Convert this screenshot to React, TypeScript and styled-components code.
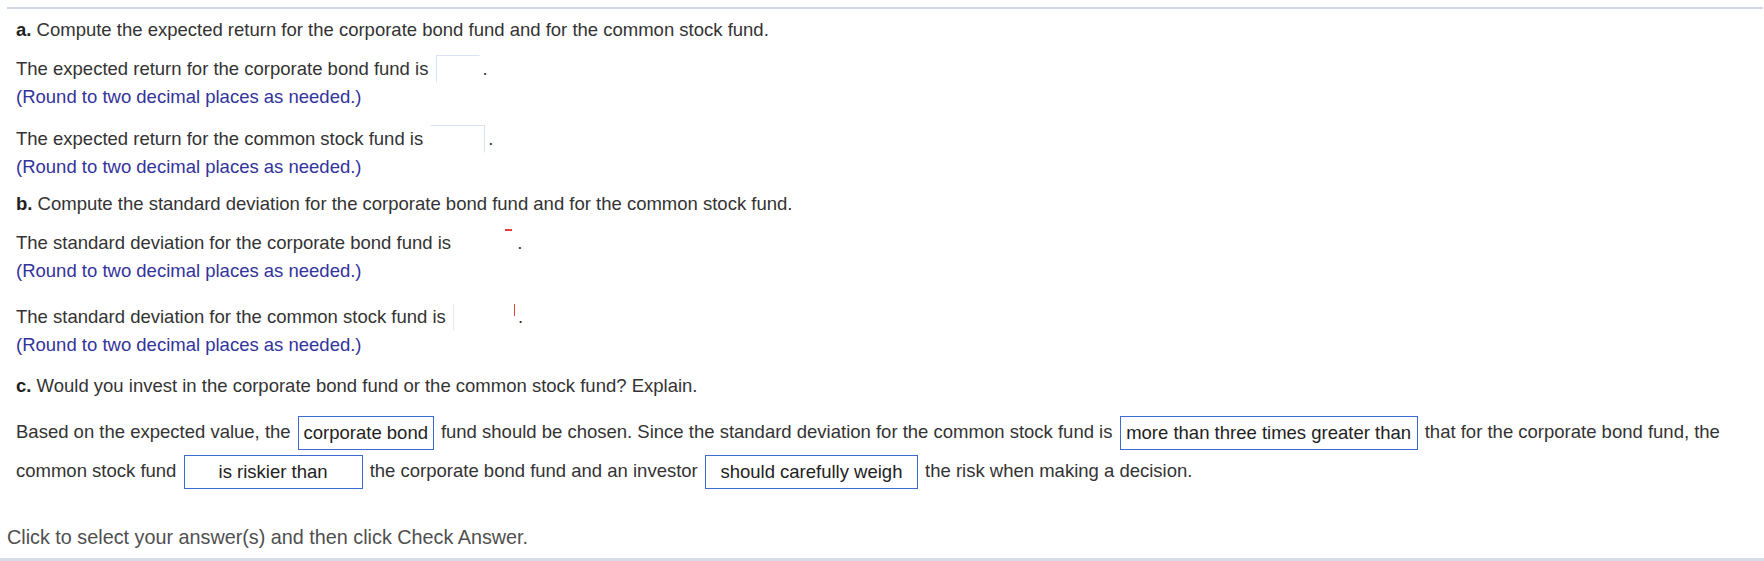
import React from "react";
import styled, { createGlobalStyle, css } from "styled-components";

const GlobalStyle = createGlobalStyle`
  html, body {
    margin: 0;
    padding: 0;
    background: #ffffff;
  }
  body {
    font-family: "Liberation Sans", Arial, sans-serif;
    font-size: 18.5px;
    color: #333333;
  }
`;

const Page = styled.div`
  width: 1764px;
  height: 561px;
  display: flex;
  flex-direction: column;
  overflow: hidden;
`;

const TopRule = styled.div`
  margin: 7px 1px 0 7px;
  height: 2px;
  flex: none;
  background: #d1d6e6;
`;

const Content = styled.div`
  padding: 0 14px 0 16px;
  display: flex;
  flex-direction: column;
`;

const Para = styled.div<{ $top: number }>`
  margin-top: ${(p) => p.$top}px;
  line-height: 28px;
  white-space: nowrap;
`;

const Label = styled.b`
  color: #1f1f1f;
  font-weight: bold;
`;

const Block = styled.div<{ $top: number }>`
  margin-top: ${(p) => p.$top}px;
  display: flex;
  flex-direction: column;
`;

const Line = styled.div`
  line-height: 28px;
  height: 28px;
  white-space: nowrap;
`;

const Hint = styled.div`
  line-height: 28px;
  color: #33339c;
  white-space: nowrap;
`;

type Edges = "tl" | "tr" | "none" | "l";

const Blank = styled.span<{ $w: number; $edges: Edges; $mark?: "dash" | "tick" }>`
  position: relative;
  display: inline-block;
  box-sizing: border-box;
  width: ${(p) => p.$w}px;
  height: 28px;
  margin: 0 3px 0 2px;
  vertical-align: top;
  border: 1px solid transparent;
  ${(p) =>
    p.$edges === "tl" &&
    css`
      border-top-color: #d9e2f6;
      border-left-color: #d9e2f6;
    `}
  ${(p) =>
    p.$edges === "tr" &&
    css`
      border-top-color: #d9e2f6;
      border-right-color: #d9e2f6;
    `}
  ${(p) =>
    p.$edges === "l" &&
    css`
      border-left-color: #e6e6ea;
    `}
  ${(p) =>
    p.$mark === "dash" &&
    css`
      &::after {
        content: "";
        position: absolute;
        right: 1px;
        top: -1px;
        width: 7px;
        height: 2px;
        background: #e2403e;
      }
    `}
  ${(p) =>
    p.$mark === "tick" &&
    css`
      &::after {
        content: "";
        position: absolute;
        right: -1px;
        top: 0px;
        width: 1px;
        height: 12px;
        background: #e2403e;
      }
    `}
`;

const Explain = styled.div`
  margin-top: 12px;
  line-height: 39px;
  width: 1734px;
`;

const Run = styled.span`
  white-space: nowrap;
`;

const Choice = styled.span<{ $w: number }>`
  display: inline-block;
  box-sizing: border-box;
  width: ${(p) => p.$w}px;
  height: 34px;
  line-height: 32px;
  margin: 0 2px;
  border: 1px solid #3f6bd0;
  text-align: center;
  vertical-align: middle;
  color: #222222;
  white-space: nowrap;
`;

const Footer = styled.div`
  margin: 33px 0 0 7px;
  line-height: 28px;
  font-size: 19.8px;
  color: #4f4f4f;
`;

const BottomRule = styled.div`
  margin-top: auto;
  height: 3px;
  flex: none;
  background: #d7dbe7;
`;

export default function App() {
  return (
    <>
      <GlobalStyle />
      <Page>
        <TopRule />
        <Content>
          <Para $top={7}>
            <Label>a.</Label> Compute the expected return for the corporate bond fund and for the common stock fund.
          </Para>
          <Block $top={11}>
            <Line>
              The expected return for the corporate bond fund is <Blank $w={44} $edges="tl" />.
            </Line>
            <Hint>(Round to two decimal places as needed.)</Hint>
          </Block>
          <Block $top={14}>
            <Line>
              The expected return for the common stock fund is <Blank $w={55} $edges="tr" />.
            </Line>
            <Hint>(Round to two decimal places as needed.)</Hint>
          </Block>
          <Para $top={9}>
            <Label>b.</Label> Compute the standard deviation for the corporate bond fund and for the common stock fund.
          </Para>
          <Block $top={11}>
            <Line>
              The standard deviation for the corporate bond fund is <Blank $w={56} $edges="none" $mark="dash" />.
            </Line>
            <Hint>(Round to two decimal places as needed.)</Hint>
          </Block>
          <Block $top={18}>
            <Line>
              The standard deviation for the common stock fund is <Blank $w={62} $edges="l" $mark="tick" />.
            </Line>
            <Hint>(Round to two decimal places as needed.)</Hint>
          </Block>
          <Para $top={13}>
            <Label>c.</Label> Would you invest in the corporate bond fund or the common stock fund? Explain.
          </Para>
          <Explain>
            <Run>Based on the expected value, the</Run> <Choice $w={136}>corporate bond</Choice>{" "}
            <Run>fund should be chosen. Since the standard deviation for the common stock fund is</Run>{" "}
            <Choice $w={298}>more than three times greater than</Choice>{" "}
            <Run>that for the corporate bond fund, the</Run> <Run>common stock fund</Run>{" "}
            <Choice $w={179}>is riskier than</Choice> <Run>the corporate bond fund and an investor</Run>{" "}
            <Choice $w={213}>should carefully weigh</Choice> <Run>the risk when making a decision.</Run>
          </Explain>
        </Content>
        <Footer>Click to select your answer(s) and then click Check Answer.</Footer>
        <BottomRule />
      </Page>
    </>
  );
}
